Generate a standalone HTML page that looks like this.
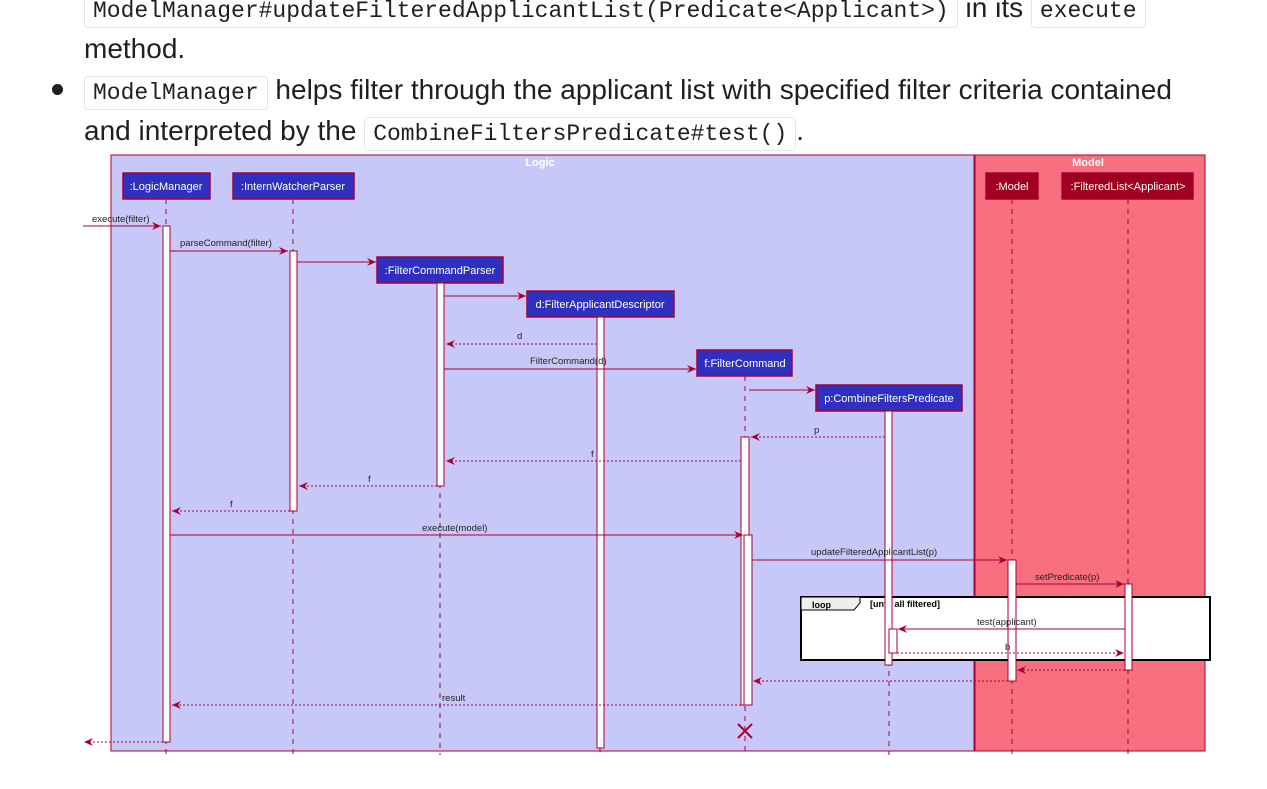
<!DOCTYPE html>
<html><head><meta charset="utf-8"><style>
body{margin:0;background:#fff;width:1267px;height:789px;overflow:hidden;position:relative;font-family:"Liberation Sans",sans-serif;color:#1f1f1f}
.t{position:absolute;left:84px;font-size:28px;line-height:41px;white-space:nowrap;letter-spacing:0}
code{font-family:"Liberation Mono",monospace;font-size:23px;letter-spacing:0;border:1px solid #e1e4e8;border-radius:4px;padding:3px 8px;background:#fff}
.dot{position:absolute;left:52px;top:84px;width:11px;height:11px;border-radius:50%;background:#1f1f1f}
svg{position:absolute;left:0;top:0}
</style></head><body>
<div class="t" style="top:-13px"><code>ModelManager#updateFilteredApplicantList(Predicate&lt;Applicant&gt;)</code> in its <code>execute</code></div>
<div class="t" style="top:28px">method.</div>
<div class="dot"></div>
<div class="t" style="top:69px"><code>ModelManager</code> helps filter through the applicant list with specified filter criteria contained</div>
<div class="t" style="top:110px">and interpreted by the <code>CombineFiltersPredicate#test()</code>.</div>
<svg width="1267" height="789" font-family="Liberation Sans,sans-serif" font-size="10">
<defs><marker id="a" markerWidth="10" markerHeight="8" refX="9" refY="4" orient="auto"><path d="M0,0 L9,4 L0,8 L3,4 Z" fill="#a80036"/></marker></defs>
<rect x="111" y="155" width="863" height="596" fill="#c8c8f8" stroke="#a80036"/>
<rect x="975" y="155" width="230" height="596" fill="#f87080" stroke="#a80036"/>
<text x="540" y="166" fill="#fff" font-weight="bold" text-anchor="middle" font-size="11">Logic</text>
<text x="1088" y="166" fill="#fff" font-weight="bold" text-anchor="middle" font-size="11">Model</text>
<rect x="801" y="597" width="409" height="63" fill="#fff" stroke="#000" stroke-width="2"/>
<path d="M801,597 H860 V603 L854,610 H801 Z" fill="#eee" stroke="#000"/>
<text x="812" y="608" font-weight="bold" font-size="9">loop</text>
<text x="870" y="607" font-weight="bold" font-size="9">[until all filtered]</text>
<g stroke="#a80036" stroke-dasharray="5,5" fill="none">
<line x1="166" y1="199" x2="166" y2="755"/><line x1="293" y1="199" x2="293" y2="755"/>
<line x1="440" y1="283" x2="440" y2="755"/><line x1="600" y1="317" x2="600" y2="755"/>
<line x1="745" y1="376" x2="745" y2="755"/><line x1="889" y1="411" x2="889" y2="755"/>
<line x1="1012" y1="199" x2="1012" y2="755"/><line x1="1128" y1="199" x2="1128" y2="755"/>
</g>
<g fill="#3030c0" stroke="#a80036" stroke-width="1.5">
<rect x="123" y="173" width="87" height="26"/><rect x="233" y="173" width="121" height="26"/>
<rect x="377" y="257" width="126" height="26"/><rect x="527" y="291" width="147" height="26"/>
<rect x="697" y="350" width="95" height="26"/><rect x="816" y="385" width="146" height="26"/>
</g>
<g fill="#a00020" stroke="#a80036" stroke-width="1.5">
<rect x="986" y="173" width="52" height="26"/><rect x="1062" y="173" width="131" height="26"/>
</g>
<g fill="#fff" font-size="11" text-anchor="middle">
<text x="166" y="190">:LogicManager</text><text x="293" y="190">:InternWatcherParser</text>
<text x="440" y="274">:FilterCommandParser</text><text x="600" y="308">d:FilterApplicantDescriptor</text>
<text x="745" y="367">f:FilterCommand</text><text x="889" y="402">p:CombineFiltersPredicate</text>
<text x="1012" y="190">:Model</text><text x="1128" y="190">:FilteredList&lt;Applicant&gt;</text>
</g>
<g fill="#fff" stroke="#a80036">
<rect x="163" y="226" width="7" height="516"/><rect x="290" y="251" width="7" height="260"/>
<rect x="437" y="283" width="7" height="203"/><rect x="597" y="317" width="7" height="431"/>
<rect x="741" y="437" width="8" height="268"/><rect x="744" y="535" width="8" height="170"/>
<rect x="885" y="411" width="7" height="254"/><rect x="889" y="629" width="8" height="24"/>
<rect x="1008" y="560" width="8" height="121"/><rect x="1125" y="584" width="7" height="86"/>
</g>
<g stroke="#a80036" fill="none" marker-end="url(#a)">
<line x1="83" y1="226" x2="161" y2="226"/><line x1="170" y1="251" x2="288" y2="251"/>
<line x1="297" y1="262" x2="376" y2="262"/><line x1="444" y1="296" x2="526" y2="296"/>
<line x1="444" y1="369" x2="696" y2="369"/><line x1="749" y1="390" x2="815" y2="390"/>
<line x1="170" y1="535" x2="743" y2="535"/><line x1="752" y1="560" x2="1007" y2="560"/>
<line x1="1016" y1="584" x2="1124" y2="584"/><line x1="1125" y1="629" x2="898" y2="629"/>
<g stroke-dasharray="2,2">
<line x1="597" y1="344" x2="446" y2="344"/><line x1="885" y1="437" x2="751" y2="437"/>
<line x1="741" y1="461" x2="446" y2="461"/><line x1="437" y1="486" x2="299" y2="486"/>
<line x1="290" y1="511" x2="172" y2="511"/><line x1="897" y1="653" x2="1124" y2="653"/>
<line x1="1125" y1="670" x2="1017" y2="670"/><line x1="1008" y1="681" x2="753" y2="681"/>
<line x1="741" y1="705" x2="172" y2="705"/><line x1="163" y1="742" x2="84" y2="742"/>
</g></g>
<path d="M738,724 L752,738 M752,724 L738,738" stroke="#a80036" stroke-width="2"/>
<g fill="#222" font-size="9.5">
<text x="92" y="222">execute(filter)</text><text x="180" y="246">parseCommand(filter)</text>
<text x="517" y="339">d</text><text x="530" y="364">FilterCommand(d)</text>
<text x="814" y="433">p</text><text x="591" y="457">f</text><text x="368" y="482">f</text><text x="230" y="507">f</text>
<text x="422" y="531">execute(model)</text><text x="811" y="555">updateFilteredApplicantList(p)</text>
<text x="1035" y="580">setPredicate(p)</text><text x="977" y="625">test(applicant)</text>
<text x="1005" y="650">b</text><text x="442" y="701">result</text>
</g>
</svg>
</body></html>
